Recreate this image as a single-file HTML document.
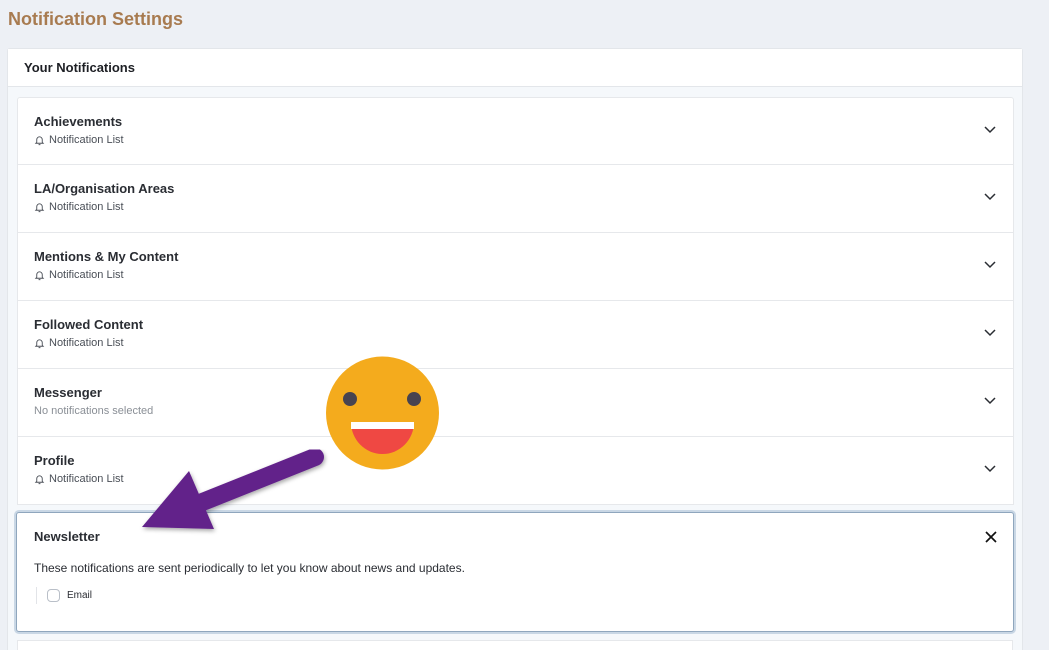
<!DOCTYPE html>
<html><head><style>
*{box-sizing:border-box;margin:0;padding:0}
html,body{width:1049px;height:650px;overflow:hidden}
body{background:#edf0f5;font-family:"Liberation Sans",Arial,sans-serif;position:relative}
h1{position:absolute;left:8px;top:9px;font-size:18px;font-weight:bold;color:#a87b50}
.card{position:absolute;left:7px;top:48px;width:1016px;height:620px;background:#f5f8fb;border:1px solid #e3e6ea;border-radius:3px}
.hdr{height:38px;background:#fff;border-bottom:1px solid #e3e6ea;padding:11px 16px;font-size:13px;font-weight:bold;color:#1d1f24}
.list{position:absolute;left:9px;top:48px;width:997px}
.item{height:68px;background:#fff;border:1px solid #e6e8eb;border-top:none;position:relative;padding:16px 16px}
.item:first-child{border-top:1px solid #e6e8eb;border-radius:3px 3px 0 0}
.t{font-size:13px;font-weight:bold;color:#2a2d33}
.s{font-size:11px;color:#4a4f57;margin-top:5px;display:flex;align-items:center;gap:4px}
.s.g{color:#8a8f96}
.chev{position:absolute;right:17px;top:28px}
.news{position:absolute;left:16px;top:512px;width:998px;height:120px;background:#fff;border:1px solid #8fa6bd;border-radius:3px;box-shadow:0 0 0 2px #c9d7e5;padding:16px 17px}
.news .d{font-size:12px;color:#2a2d33;margin-top:17px}
.em{margin-top:12px;border-left:1px solid #e2e4e8;margin-left:2px;padding-left:10px;display:flex;align-items:center;gap:7px;font-size:10px;color:#2a2d33;height:17px}
.cb{width:13px;height:13px;border:1px solid #b9bfc8;border-radius:4px}
.next{position:absolute;left:17px;top:640px;width:996px;height:20px;background:#fff;border:1px solid #e6e8eb}
</style></head><body>
<h1>Notification Settings</h1>
<div class="card"><div class="hdr">Your Notifications</div>
<div class="list">
<div class="item"><div class="t">Achievements</div><div class="s"><svg width="11" height="11" viewBox="0 0 12 12" fill="none" stroke="#4a4f57" stroke-width="1"><path d="M3 8V5a3 3 0 0 1 6 0v3l1 1H2z M5 10.5h2"/></svg>Notification List</div><svg class="chev" width="12" height="8" viewBox="0 0 12 8"><path d="M1 1l5 5 5-5" fill="none" stroke="#2a2d33" stroke-width="1.5"/></svg></div>
<div class="item"><div class="t">LA/Organisation Areas</div><div class="s"><svg width="11" height="11" viewBox="0 0 12 12" fill="none" stroke="#4a4f57" stroke-width="1"><path d="M3 8V5a3 3 0 0 1 6 0v3l1 1H2z M5 10.5h2"/></svg>Notification List</div><svg class="chev" width="12" height="8" viewBox="0 0 12 8"><path d="M1 1l5 5 5-5" fill="none" stroke="#2a2d33" stroke-width="1.5"/></svg></div>
<div class="item"><div class="t">Mentions &amp; My Content</div><div class="s"><svg width="11" height="11" viewBox="0 0 12 12" fill="none" stroke="#4a4f57" stroke-width="1"><path d="M3 8V5a3 3 0 0 1 6 0v3l1 1H2z M5 10.5h2"/></svg>Notification List</div><svg class="chev" width="12" height="8" viewBox="0 0 12 8"><path d="M1 1l5 5 5-5" fill="none" stroke="#2a2d33" stroke-width="1.5"/></svg></div>
<div class="item"><div class="t">Followed Content</div><div class="s"><svg width="11" height="11" viewBox="0 0 12 12" fill="none" stroke="#4a4f57" stroke-width="1"><path d="M3 8V5a3 3 0 0 1 6 0v3l1 1H2z M5 10.5h2"/></svg>Notification List</div><svg class="chev" width="12" height="8" viewBox="0 0 12 8"><path d="M1 1l5 5 5-5" fill="none" stroke="#2a2d33" stroke-width="1.5"/></svg></div>
<div class="item"><div class="t">Messenger</div><div class="s g">No notifications selected</div><svg class="chev" width="12" height="8" viewBox="0 0 12 8"><path d="M1 1l5 5 5-5" fill="none" stroke="#2a2d33" stroke-width="1.5"/></svg></div>
<div class="item"><div class="t">Profile</div><div class="s"><svg width="11" height="11" viewBox="0 0 12 12" fill="none" stroke="#4a4f57" stroke-width="1"><path d="M3 8V5a3 3 0 0 1 6 0v3l1 1H2z M5 10.5h2"/></svg>Notification List</div><svg class="chev" width="12" height="8" viewBox="0 0 12 8"><path d="M1 1l5 5 5-5" fill="none" stroke="#2a2d33" stroke-width="1.5"/></svg></div>
</div></div>
<div class="news"><div class="t">Newsletter</div>
<svg style="position:absolute;right:16px;top:18px" width="12" height="12" viewBox="0 0 12 12"><path d="M1 1l10 10M11 1L1 11" stroke="#111" stroke-width="1.7"/></svg>
<div class="d">These notifications are sent periodically to let you know about news and updates.</div>
<div class="em"><div class="cb"></div>Email</div></div>
<div class="next"></div>
<svg style="position:absolute;left:0;top:0" width="1049" height="650">
<defs><filter id="sh"><feDropShadow dx="1" dy="2" stdDeviation="2" flood-opacity="0.35"/></filter></defs>
<g filter="url(#sh)" fill="#62228a"><path d="M315 457L200 503" stroke="#62228a" stroke-width="18" stroke-linecap="round"/><path d="M142 527L189 471L214 529Z"/></g>
<circle cx="382.5" cy="413" r="56.5" fill="#f4ab1d"/>
<circle cx="350" cy="399" r="7" fill="#474350"/><circle cx="414" cy="399" r="7" fill="#474350"/>
<path d="M351 422H414A31.5 32 0 0 1 351 422Z" fill="#ef4843"/>
<rect x="351" y="422" width="63" height="7" fill="#fff"/>
</svg>
</body></html>
